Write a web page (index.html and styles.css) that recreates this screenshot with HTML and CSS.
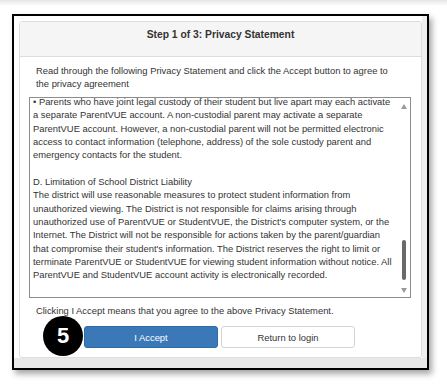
FILE: index.html
```html
<!DOCTYPE html>
<html lang="en">
<head>
  <meta charset="UTF-8">
  <meta name="viewport" content="width=device-width, initial-scale=1.0">
  <title>ParentVUE - Privacy Statement</title>
  <link rel="stylesheet" href="styles.css">
</head>
<body>
  <div class="frame">
    <div class="panel">
      <div class="panel-heading">Step 1 of 3: Privacy Statement</div>
      <div class="panel-body">
        <p class="intro">Read through the following Privacy Statement and click the Accept button to agree to<br>the privacy agreement</p>
        <!-- scrolled statement box -->
        <div class="statement">
          <div class="statement-text">
            &bull; Parents who have joint legal custody of their student but live apart may each activate<br>
            a separate ParentVUE account. A non-custodial parent may activate a separate<br>
            ParentVUE account. However, a non-custodial parent will not be permitted electronic<br>
            access to contact information (telephone, address) of the sole custody parent and<br>
            emergency contacts for the student.<br>
            <br>
            D. Limitation of School District Liability<br>
            The district will use reasonable measures to protect student information from<br>
            unauthorized viewing. The District is not responsible for claims arising through<br>
            unauthorized use of ParentVUE or StudentVUE, the District's computer system, or the<br>
            Internet. The District will not be responsible for actions taken by the parent/guardian<br>
            that compromise their student's information. The District reserves the right to limit or<br>
            terminate ParentVUE or StudentVUE for viewing student information without notice. All<br>
            ParentVUE and StudentVUE account activity is electronically recorded.
          </div>
          <div class="scrollbar">
            <span class="arrow-up"></span>
            <span class="thumb"></span>
            <span class="arrow-down"></span>
          </div>
        </div>
        <p class="notice">Clicking I Accept means that you agree to the above Privacy Statement.</p>
        <div class="actions">
          <span class="step-badge">5</span>
          <button class="btn btn-primary">I Accept</button>
          <button class="btn btn-default">Return to login</button>
        </div>
      </div>
    </div>
  </div>
</body>
</html>
```

FILE: styles.css
```css
body {
  margin: 0;
  min-height: 388px;
  background: linear-gradient(#e6e6e6, #fff 6px) no-repeat;
  font-family: "Liberation Sans", Arial, sans-serif;
  color: #333;
}
.frame {
  box-sizing: border-box;
  width: 417px;
  height: 356px;
  margin: 14px 0 0 12px;
  padding: 5px 5px 10px;
  border: 2px solid #000;
  background:
    linear-gradient(to top, #e8e8e8 10px, transparent 10px),
    linear-gradient(to left, #efefef 5px, #fff 5px);
  box-shadow: 3px 4px 6px rgba(0, 0, 0, 0.35);
}
.panel {
  box-sizing: border-box;
  height: 337px;
  border: 1px solid #ddd;
  border-radius: 3px;
  background: #fff;
}
.panel-heading {
  padding: 6px 0 15px;
  background: #f5f5f5;
  border-bottom: 1px solid #ddd;
  text-align: center;
  font-size: 10.3px;
  line-height: 13px;
  font-weight: bold;
}
.panel-body {
  padding: 8px 0 0 9px;
  font-size: 9.4px;
}
.intro {
  margin: 0 0 7px 7px;
  line-height: 12.5px;
}
.statement {
  box-sizing: border-box;
  display: flex;
  width: 382px;
  height: 201px;
  border: 1px solid #8c8c8c;
  overflow: hidden;
}
.statement-text {
  flex: 1;
  margin-top: -3px;
  padding-left: 3px;
  line-height: 13.33px;
  white-space: nowrap;
}
/* fake scrollbar, scrolled near the bottom */
.scrollbar {
  width: 13px;
  display: flex;
  flex-direction: column;
  align-items: center;
  padding-top: 6px;
}
.arrow-up,
.arrow-down {
  width: 0;
  height: 0;
  border-left: 3px solid transparent;
  border-right: 3px solid transparent;
}
.arrow-up {
  border-bottom: 5px solid #9a9a9a;
}
.thumb {
  width: 4px;
  height: 40px;
  margin-top: 131px;
  border-radius: 2px;
  background: #6a6a6a;
}
.arrow-down {
  margin-top: 8px;
  border-top: 5px solid #9a9a9a;
}
.notice {
  margin: 6px 0 0 7px;
  line-height: 13px;
}
.actions {
  position: relative;
  display: flex;
  gap: 3px;
  margin-top: 9px;
  padding-left: 55px;
}
.btn {
  box-sizing: border-box;
  width: 134px;
  height: 22px;
  padding: 0;
  border-radius: 3px;
  font-family: inherit;
  font-size: 9.4px;
  cursor: pointer;
}
.btn-primary {
  background: #3a78b7;
  border: 1px solid #2e6da4;
  color: #fff;
}
.btn-default {
  background: #fff;
  border: 1px solid #d4d4d4;
  color: #333;
}
/* numbered callout over the buttons */
.step-badge {
  position: absolute;
  left: 14px;
  top: -10px;
  width: 40px;
  height: 40px;
  display: flex;
  align-items: center;
  justify-content: center;
  border-radius: 50%;
  background: #000;
  color: #fff;
  font-size: 22px;
  font-weight: bold;
}
```
